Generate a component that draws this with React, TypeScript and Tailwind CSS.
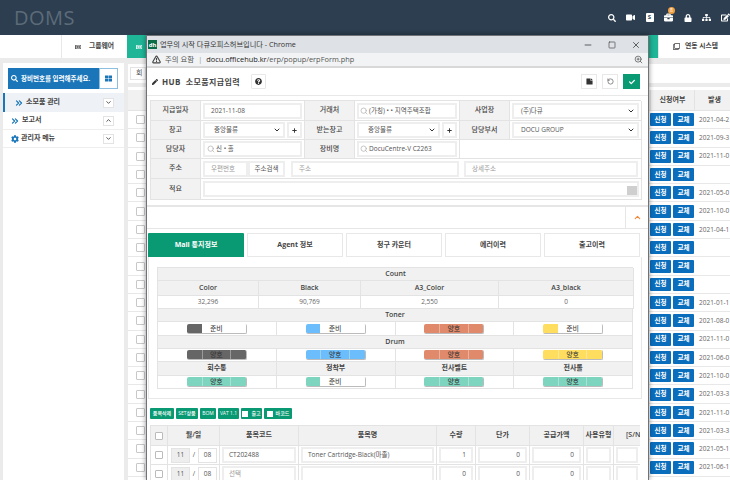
import React from 'react';
import { ChevronDown, ChevronUp, ChevronsRight, RotateCcw, Search, X, Minus, Square, ZoomIn, TriangleAlert } from 'lucide-react';
import { FaBriefcase, FaCheck, FaCog, FaEdit, FaLock, FaPen, FaPlus, FaQuestionCircle, FaRegClone, FaRegNewspaper, FaSearch, FaSitemap, FaStickyNote, FaThLarge, FaVideo } from 'react-icons/fa';

const rows = [
  '2021-04-2', '2021-09-3', '2021-11-0', '', '2021-05-0',
  '2021-10-0', '2021-04-1', '', '', '',
  '2021-01-1', '2021-08-0', '2021-11-0', '2021-06-0', '2021-10-0',
  '2021-03-3', '2021-11-0', '2021-03-3', '2021-05-1', '2021-06-1',
];

function Label({ children }: { children: React.ReactNode }) {
  return (
    <div className="flex items-center justify-center bg-[#f2f2f2] border-r border-b border-[#e3e3e3] text-[7px] font-medium text-[#444]">
      {children}
    </div>
  );
}

function Box({ children, className = '' }: { children?: React.ReactNode; className?: string }) {
  return (
    <div className={`flex items-center h-[16px] border-2 border-[#eeeeee] bg-white text-[6.5px] text-[#555] whitespace-nowrap overflow-hidden ${className}`}>
      {children}
    </div>
  );
}

function Cell({ children, className = '' }: { children?: React.ReactNode; className?: string }) {
  return <div className={`flex items-center gap-[2px] px-[2px] border-r border-b border-[#e3e3e3] ${className}`}>{children}</div>;
}

function Pill({ color, good }: { color: string; good: boolean }) {
  return (
    <div className="flex items-center justify-center border-r border-b border-[#e3e3e3] bg-white">
      <div className="flex w-[60px] h-[10px] rounded-[2px] overflow-hidden border-r border-b border-[#bbb] text-[7px] leading-[9px] text-[#333] text-center">
        <div className="w-[15px]" style={{ backgroundColor: color }} />
        <div className="w-[30px] border-x border-[#ffffff55]" style={good ? { backgroundColor: color } : { backgroundColor: '#fff' }}>
          {good ? '양호' : '준비'}
        </div>
        <div className="w-[15px]" style={good ? { backgroundColor: color } : { backgroundColor: '#fff' }} />
      </div>
    </div>
  );
}

function Section({ children }: { children: React.ReactNode }) {
  return (
    <div className="col-span-4 flex items-center justify-center bg-[#f1f1f1] border-r border-b border-[#e3e3e3] text-[7px] font-semibold text-[#444]">
      {children}
    </div>
  );
}

function Head({ children }: { children: React.ReactNode }) {
  return (
    <div className="flex items-center justify-center bg-[#f1f1f1] border-r border-b border-[#e3e3e3] text-[7px] font-semibold text-[#444]">
      {children}
    </div>
  );
}

function Value({ children }: { children: React.ReactNode }) {
  return (
    <div className="flex items-center justify-center bg-white border-r border-b border-[#e3e3e3] text-[6.5px] text-[#666]">
      {children}
    </div>
  );
}

function SmallBtn({ children, className = '' }: { children: React.ReactNode; className?: string }) {
  return (
    <div className={`flex items-center justify-center gap-[1px] h-[11px] rounded-[1px] bg-[#0a9a73] text-white text-[5px] font-medium whitespace-nowrap ${className}`}>
      {children}
    </div>
  );
}

function ItemRow({ code, name, qty, placeholder }: { code: string; name: string; qty: string; placeholder?: boolean }) {
  const cell = 'flex items-center px-[2px] border-r border-b border-[#e3e3e3]';
  return (
    <div className="grid grid-cols-[17px_52px_79px_138px_39px_54px_54px_30px_27px] h-[19px] shrink-0">
      <div className={`${cell} justify-center`}>
        <div className="w-[8px] h-[8px] border border-[#bbb] rounded-[1px]" />
      </div>
      <div className={`${cell} gap-[3px]`}>
        <div className="flex items-center justify-center w-[20px] h-[15px] ml-[1px] bg-[#eeeeee] border border-[#e3e3e3] text-[6.5px] text-[#555]">11</div>
        <span className="text-[6.5px] text-[#555]">/</span>
        <div className="flex items-center justify-center w-[20px] h-[15px] border border-[#e3e3e3] text-[6.5px] text-[#555]">08</div>
      </div>
      <div className={cell}><Box className={`w-full h-[15px] pl-[5px] ${placeholder ? 'text-[#999]' : ''}`}>{code}</Box></div>
      <div className={cell}><Box className="w-full h-[15px] pl-[5px]">{name}</Box></div>
      <div className={cell}><Box className="w-full h-[15px] justify-end pr-[5px]">{qty}</Box></div>
      <div className={cell}><Box className="w-full h-[15px] justify-end pr-[5px]">0</Box></div>
      <div className={cell}><Box className="w-full h-[15px] justify-end pr-[5px]">0</Box></div>
      <div className={cell}><Box className="w-full h-[15px]" /></div>
      <div className={cell}><Box className="w-full h-[15px]" /></div>
    </div>
  );
}

function Popup() {
  const tab = 'flex items-center justify-center w-[96px] h-[24px] bg-white border border-[#e8e8e8] text-[7px] font-bold text-[#444]';
  return (
    <div className="absolute left-[146px] top-[35px] w-[503px] h-[445px] flex flex-col overflow-hidden bg-white border-x border-t border-[#6f7276] shadow-[0_0_5px_rgba(0,0,0,0.45)]">
      <div className="flex items-center h-[17px] shrink-0 pl-[1px] bg-[#dee1e6] text-[7.2px] text-[#333]">
        <div className="flex items-center justify-center w-[9px] h-[9px] bg-[#0a6b45] text-white text-[6px] font-bold leading-none">dh</div>
        <span className="ml-[3px]">업무의 시작 다큐오피스허브입니다 - Chrome</span>
        <div className="ml-auto flex items-center gap-[15px] pr-[7px] text-[#444]">
          <Minus size={10} />
          <Square size={8} />
          <X size={10} />
        </div>
      </div>
      <div className="flex items-center h-[15px] shrink-0 pl-[5px] pr-[5px] bg-[#f1f3f4] border-b-2 border-[#d8d8d8] text-[7.4px] text-[#555]">
        <TriangleAlert size={9} strokeWidth={3} className="text-[#444]" />
        <span className="ml-[4px]">주의 요함</span>
        <span className="mx-[4px] text-[#999]">|</span>
        <span className="text-[#222]">docu.officehub.kr</span>
        <span>/erp/popup/erpForm.php</span>
        <ZoomIn size={9} className="ml-auto" />
      </div>

      <div className="flex items-center h-[28px] shrink-0 pl-[5px] pr-[8px] border-b border-[#e8e8e8]">
        <FaPen size={6} className="text-[#333]" />
        <span className="ml-[4px] text-[8px] font-bold tracking-[0.4px] text-[#444]">HUB&nbsp; 소모품지급입력</span>
        <div className="ml-[11px] flex items-center justify-center w-[15px] h-[15px] border border-[#e8e8e8] rounded-[1px]">
          <FaQuestionCircle size={7} className="text-[#333]" />
        </div>
        <div className="ml-auto flex items-center gap-[5px]">
          <div className="flex items-center justify-center w-[16px] h-[15px] border border-[#e8e8e8]"><FaStickyNote size={7} className="text-[#333] -scale-y-100" /></div>
          <div className="flex items-center justify-center w-[16px] h-[15px] border border-[#e8e8e8]"><RotateCcw size={7} className="text-[#444]" /></div>
          <div className="flex items-center justify-center w-[17px] h-[15px] bg-[#0a9a73]"><FaCheck size={6} className="text-white" /></div>
        </div>
      </div>

      <div className="mt-[4px] ml-[3px] w-[491px] grid grid-cols-[50px_104px_50px_105px_50px_132px] grid-rows-[20px_19px_19px_20px_21px] shrink-0 border-l border-t border-[#e3e3e3]">
        <Label>지급일자</Label>
        <Cell><Box className="w-full pl-[6px]">2021-11-08</Box></Cell>
        <Label>거래처</Label>
        <Cell><Box className="w-full pl-[1px] gap-[1px]"><Search size={8} className="text-[#aaa] shrink-0" />(가칭) • • 지역주택조합</Box></Cell>
        <Label>사업장</Label>
        <Cell><Box className="w-full pl-[7px] justify-between pr-[2px]">(주)다큐<ChevronDown size={8} strokeWidth={3} className="text-[#333]" /></Box></Cell>

        <Label>창고</Label>
        <Cell>
          <Box className="flex-1 pl-[9px] justify-between pr-[2px]">중앙물류<ChevronDown size={8} strokeWidth={3} className="text-[#333]" /></Box>
          <Box className="w-[15px] justify-center"><FaPlus size={5} className="text-[#333]" /></Box>
        </Cell>
        <Label>받는창고</Label>
        <Cell>
          <Box className="flex-1 pl-[9px] justify-between pr-[2px]">중앙물류<ChevronDown size={8} strokeWidth={3} className="text-[#333]" /></Box>
          <Box className="w-[15px] justify-center"><FaPlus size={5} className="text-[#333]" /></Box>
        </Cell>
        <Label>담당부서</Label>
        <Cell><Box className="w-full pl-[7px] justify-between pr-[2px]">DOCU GROUP<ChevronDown size={8} strokeWidth={3} className="text-[#333]" /></Box></Cell>

        <Label>담당자</Label>
        <Cell><Box className="w-full pl-[2px] gap-[1px]"><Search size={8} className="text-[#aaa] shrink-0" />신 • 홀</Box></Cell>
        <Label>장비명</Label>
        <Cell><Box className="w-full pl-[1px] gap-[1px]"><Search size={8} className="text-[#aaa] shrink-0" />DocuCentre-V C2263</Box></Cell>
        <Cell className="col-span-2" />

        <Label>주소</Label>
        <Cell className="col-span-5">
          <Box className="w-[45px] pl-[6px] text-[#999]">우편번호</Box>
          <Box className="w-[37px] -ml-[2px] justify-center text-[#555]">주소검색</Box>
          <Box className="w-[168px] ml-[4px] pl-[6px] text-[#999]">주소</Box>
          <Box className="w-[174px] ml-[3px] pl-[6px] text-[#999]">상세주소</Box>
        </Cell>

        <Label>적요</Label>
        <Cell className="col-span-5">
          <Box className="w-full justify-end items-end">
            <div className="w-[10px] h-[9px] bg-[#cfcfcf]" />
          </Box>
        </Cell>
      </div>

      <div className="flex justify-end h-[24px] shrink-0 mt-[5px] border-t-2 border-b border-[#e6e6e6]">
        <div className="flex items-center justify-center w-[23px] border-l border-[#e6e6e6]">
          <ChevronUp size={9} strokeWidth={3} className="text-[#f0883a]" />
        </div>
      </div>

      <div className="flex gap-[3px] ml-[1px] mt-[4px] shrink-0">
        <div className="flex items-center justify-center w-[96px] h-[24px] bg-[#0a9a73] rounded-t-[1px] text-[7px] font-bold text-white">Mail 통지정보</div>
        <div className={tab}>Agent 정보</div>
        <div className={tab}>청구 카운터</div>
        <div className={tab}>에러이력</div>
        <div className={tab}>출고이력</div>
      </div>

      <div className="ml-[1px] w-[494px] h-[142px] shrink-0 pt-[10px] pl-[8px] border border-t-0 border-[#e8e8e8]">
        <div className="grid grid-cols-[101px_102px_138px_135px] grid-rows-[13px_15px_13px] w-[476px] border-l border-t border-[#e3e3e3]">
          <Section>Count</Section>
          <Head>Color</Head><Head>Black</Head><Head>A3_Color</Head><Head>A3_black</Head>
          <Value>32,296</Value><Value>90,769</Value><Value>2,550</Value><Value>0</Value>
        </div>
        <div className="grid grid-cols-4 grid-rows-[13px_14px_13px_13px_14px_13px] w-[476px] border-l border-[#e3e3e3]">
          <Section>Toner</Section>
          <Pill color="#666666" good={false} /><Pill color="#6bbdfc" good={false} /><Pill color="#e08a6b" good /><Pill color="#ffdd5f" good={false} />
          <Section>Drum</Section>
          <Pill color="#666666" good /><Pill color="#6bbdfc" good /><Pill color="#e08a6b" good /><Pill color="#ffdd5f" good />
          <Head>회수통</Head><Head>정착부</Head><Head>전사벨트</Head><Head>전사롤</Head>
          <Pill color="#7dd4bf" good /><Pill color="#7dd4bf" good={false} /><Pill color="#7dd4bf" good /><Pill color="#7dd4bf" good />
        </div>
      </div>

      <div className="flex gap-[2px] mt-[9px] ml-[3px] shrink-0">
        <SmallBtn className="w-[24px]">품목삭제</SmallBtn>
        <SmallBtn className="w-[22px]">SET상품</SmallBtn>
        <SmallBtn className="w-[16px]">BOM</SmallBtn>
        <SmallBtn className="w-[21px]">VAT 1.1</SmallBtn>
        <SmallBtn className="w-[21px]"><span className="w-[6px] h-[6px] mr-[2px] bg-white" />출고</SmallBtn>
        <SmallBtn className="w-[28px]"><span className="w-[6px] h-[6px] mr-[2px] bg-white" />바코드</SmallBtn>
      </div>

      <div className="flex flex-col w-[490px] ml-[3px] mt-[6px] border-l border-t border-[#e3e3e3] overflow-hidden">
        <div className="grid grid-cols-[17px_52px_79px_138px_39px_54px_54px_30px_27px] h-[20px] shrink-0">
          <Head><div className="w-[8px] h-[8px] bg-white border border-[#bbb] rounded-[1px]" /></Head>
          <Head>월/일</Head><Head>품목코드</Head><Head>품목명</Head><Head>수량</Head><Head>단가</Head><Head>공급가액</Head>
          <Head>사용유형</Head>
          <div className="flex items-center pl-[12px] overflow-hidden whitespace-nowrap bg-[#f1f1f1] border-b border-[#e3e3e3] text-[7px] font-semibold text-[#444]">[S/N]</div>
        </div>
        <ItemRow code="CT202488" name="Toner Cartridge-Black(마졸)" qty="1" />
        <ItemRow code="선택" name="" qty="0" placeholder />
      </div>
    </div>
  );
}

export default function App() {
  const topIcon = 'flex items-center justify-center w-[19px]';
  const sideText = 'text-[7px] font-semibold text-[#444]';
  return (
    <div className="relative flex flex-col w-[730px] h-[480px] overflow-hidden bg-[#ebebeb] font-['Open_Sans','Noto_Sans_CJK_KR',sans-serif]">
      <header className="flex items-center justify-between h-[35px] shrink-0 pl-[14px] bg-[#2c3e50]">
        <span className="text-[20px] font-normal tracking-[0.5px] text-[#5d6b78]">DOMS</span>
        <div className="flex items-center -mr-[5px] text-white">
          <div className={topIcon}><FaSearch size={8} /></div>
          <div className={topIcon}><FaVideo size={9} /></div>
          <div className={topIcon}>
            <div className="flex items-center justify-center w-[8px] h-[9px] rounded-[1px] bg-white text-[6px] font-bold text-[#2c3e50]">S</div>
          </div>
          <div className={`${topIcon} relative`}>
            <FaBriefcase size={9} />
            <span className="absolute -top-[6px] left-[9px] flex items-center justify-center w-[7px] h-[7px] rounded-full bg-[#f0a040] text-[5px] text-white">8</span>
          </div>
          <div className={topIcon}><FaLock size={8} /></div>
          <div className={topIcon}><FaSitemap size={9} /></div>
          <div className={topIcon}><FaEdit size={9} /></div>
        </div>
      </header>

      <nav className="flex h-[23px] shrink-0 bg-white text-[6.8px] font-semibold text-[#444]">
        <div className="w-[62px] border-r border-[#e8e8e8]" />
        <div className="flex items-center gap-[8px] w-[65px] pl-[13px]"><FaRegNewspaper size={6} />그룹웨어</div>
        <div className="flex-1 bg-[#1fb597] pl-[9px] flex items-center"><FaRegNewspaper size={6} className="text-white" /></div>
        <div className="flex items-center gap-[5px] w-[72px] pl-[14px] border-l border-[#e8e8e8] bg-white"><FaRegClone size={7} />연동 시스템</div>
      </nav>

      <div className="flex flex-1 gap-[4px] pl-[3px] pt-[5px] min-h-0">
        <aside className="flex flex-col w-[121px] shrink-0 bg-white">
          <div className="flex h-[21px] mt-[5px] mx-[5px] shrink-0">
            <div className="flex items-center gap-[3px] w-[91px] pl-[3px] bg-[#1a76b9] text-[6.5px] font-semibold text-white whitespace-nowrap">
              <FaSearch size={7} className="shrink-0" />장비번호를 입력해주세요.
            </div>
            <div className="flex items-center justify-center w-[19px] border border-[#8fbfe0]">
              <FaThLarge size={7} className="text-[#1a76b9]" />
            </div>
          </div>
          <div className={`flex items-center h-[19px] mt-[4px] pl-[9px] pr-[10px] bg-[#eef1f6] border-l-2 border-[#1a76b9] ${sideText}`}>
            <ChevronsRight size={10} strokeWidth={3} className="text-[#1a76b9]" />
            <span className="ml-[2px]">소모품 관리</span>
            <div className="ml-auto flex items-center justify-center w-[11px] h-[10px] bg-white border border-[#e3e3e3]"><ChevronDown size={7} strokeWidth={3} /></div>
          </div>
          <div className={`flex items-center h-[18px] pl-[7px] pr-[10px] border-b border-[#eeeeee] ${sideText}`}>
            <ChevronsRight size={10} strokeWidth={3} className="text-[#1a76b9]" />
            <span className="ml-[2px]">보고서</span>
            <div className="ml-auto flex items-center justify-center w-[11px] h-[10px] bg-white border border-[#e3e3e3]"><ChevronUp size={7} strokeWidth={3} /></div>
          </div>
          <div className={`flex items-center h-[18px] pl-[8px] pr-[10px] border-b border-[#eeeeee] ${sideText}`}>
            <FaCog size={8} className="text-[#1a76b9]" />
            <span className="ml-[2px]">관리자 메뉴</span>
            <div className="ml-auto flex items-center justify-center w-[11px] h-[10px] bg-white border border-[#e3e3e3]"><ChevronDown size={7} strokeWidth={3} /></div>
          </div>
        </aside>

        <main className="flex flex-col flex-1 min-w-0">
          <div className="flex items-center h-[19px] shrink-0 mt-[1px] pl-[2px] bg-white">
            <div className="flex items-center h-[13px] w-[16px] pl-[5px] border border-[#e3e3e3] text-[7px] text-[#555]">회</div>
          </div>
          <div className="flex-1 mt-[4px] pt-[3px] bg-white overflow-hidden">
            <div className="flex justify-end h-[21px] bg-[#f1f1f1] border-b border-[#e3e3e3] text-[7px] font-semibold text-[#444]">
              <div className="flex items-center justify-center w-[45px] border-x border-[#e3e3e3]">신청여부</div>
              <div className="flex items-center w-[35px] pl-[13px]">발생</div>
            </div>
            {rows.map((date, i) => (
              <div key={i} className="flex items-center h-[18.3px] pl-[8px] border-b border-[#e8e8e8]">
                <div className="w-[9px] h-[9px] border border-[#c8c8c8] rounded-[1px]" />
                <div className="ml-auto flex items-center gap-[2px] w-[80px]">
                  <div className="flex items-center justify-center w-[21px] h-[13px] rounded-[1px] bg-[#0a6ebd] text-[6.5px] font-semibold text-white">신청</div>
                  <div className="flex items-center justify-center w-[21px] h-[13px] rounded-[1px] bg-[#0a6ebd] text-[6.5px] font-semibold text-white">교체</div>
                  <span className="ml-[3px] text-[6.5px] text-[#666] whitespace-nowrap">{date}</span>
                </div>
              </div>
            ))}
          </div>
        </main>
      </div>

      <Popup />
    </div>
  );
}
